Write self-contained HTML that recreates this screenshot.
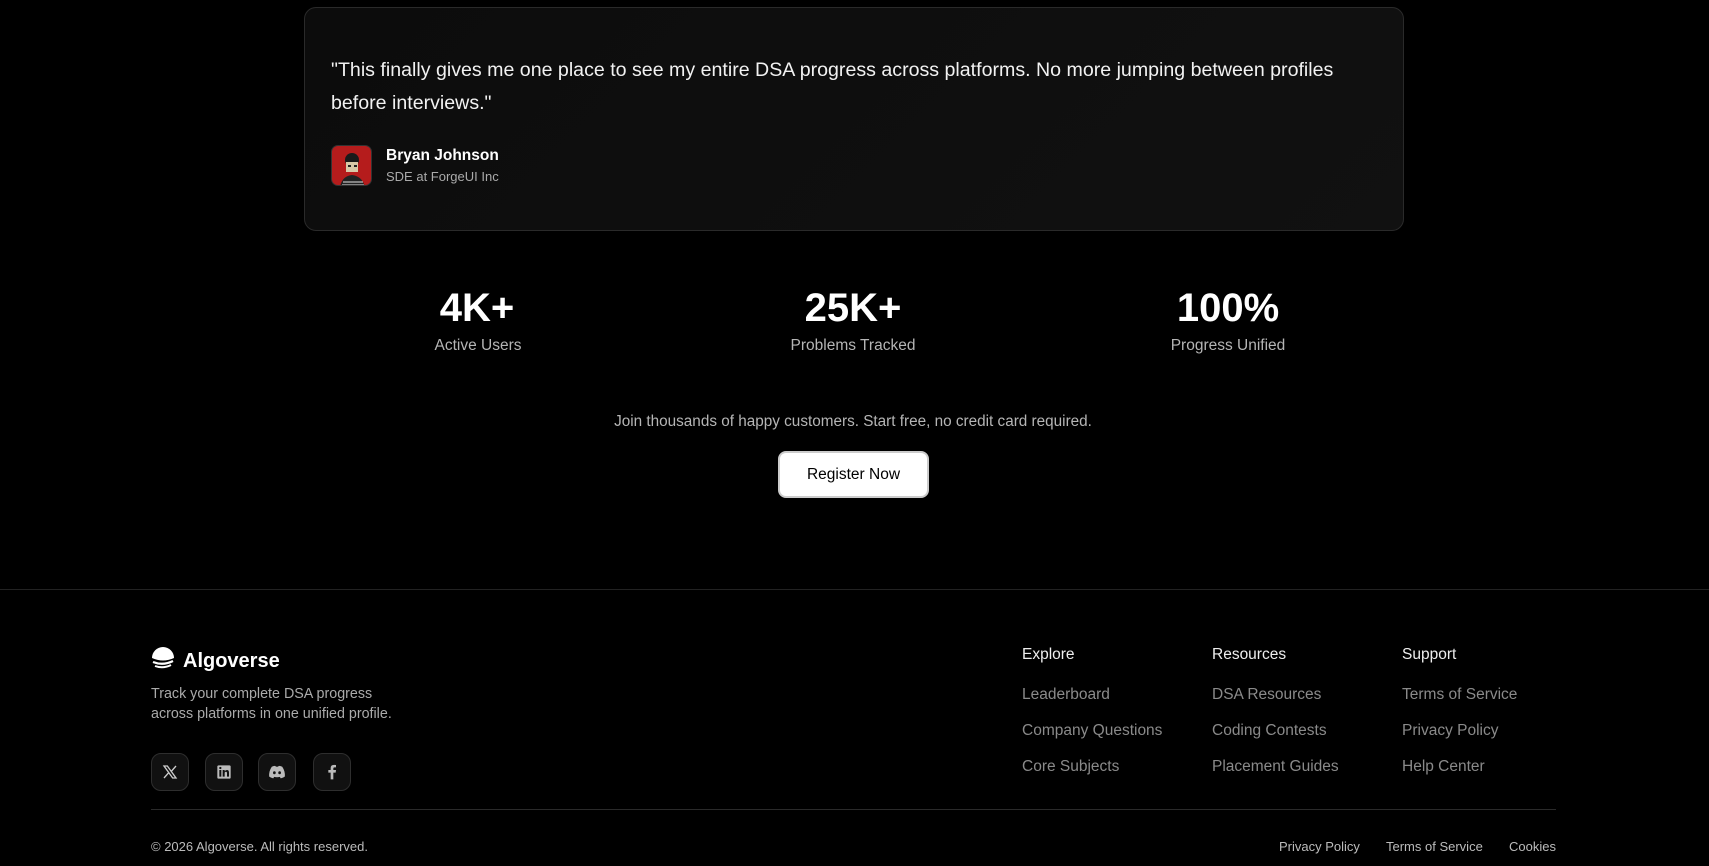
<!DOCTYPE html>
<html><head><meta charset="utf-8"><style>
*{margin:0;padding:0;box-sizing:border-box}
body{width:1709px;height:866px;background:#000;font-family:"Liberation Sans",sans-serif;color:#fff;position:relative;overflow:hidden}
.a{position:absolute;white-space:nowrap}
.card{position:absolute;left:304px;top:7px;width:1100px;height:224px;border:1px solid #2a2a2a;border-radius:12px;background:linear-gradient(135deg,#0c0c0c,#111)}
.q{left:331px;top:54px;font-size:19.6px;line-height:33px;color:#f2f2f2;white-space:normal;width:1060px}
.c{transform:translateX(-50%);text-align:center}
.num{font-size:40px;font-weight:bold;top:286px}
.lbl{font-size:15.5px;color:#b5b5b5;top:337px}
.h{font-size:15.5px;color:#eee;top:646px}
.l{font-size:15.5px;color:#8a8a8a}
.soc{position:absolute;top:753px;width:38px;height:38px;border:1px solid #2e2e2e;border-radius:10px;background:#111;display:flex;align-items:center;justify-content:center}
.b{font-size:13px;color:#bbb;top:839px}
</style></head><body>
<div class="card"></div>
<div class="a q">"This finally gives me one place to see my entire DSA progress across platforms. No more jumping between profiles before interviews."</div>
<div class="a" style="left:331px;top:145px;width:41px;height:41px;border-radius:7px;border:1px solid #333;background:#b51c1c;overflow:hidden">
<svg width="41" height="41" viewBox="0 0 41 41"><circle cx="20" cy="14" r="7" fill="#1a1a1a"/><rect x="14" y="16" width="12" height="10" fill="#d8c9a8"/><rect x="16" y="19" width="3" height="2" fill="#222"/><rect x="22" y="19" width="3" height="2" fill="#222"/><path d="M8 41 Q10 30 20 29 Q30 30 33 41Z" fill="#222"/><path d="M11 36h20M10 39h22" stroke="#bbb" stroke-width="1.3"/></svg></div>
<div class="a" style="left:386px;top:147px;font-size:15.5px;font-weight:bold">Bryan Johnson</div>
<div class="a" style="left:386px;top:169px;font-size:13px;color:#aaa">SDE at ForgeUI Inc</div>

<div class="a c num" style="left:477px">4K+</div>
<div class="a c lbl" style="left:478px">Active Users</div>
<div class="a c num" style="left:853px">25K+</div>
<div class="a c lbl" style="left:853px">Problems Tracked</div>
<div class="a c num" style="left:1228px">100%</div>
<div class="a c lbl" style="left:1228px">Progress Unified</div>

<div class="a c" style="left:853px;top:413px;font-size:15.3px;color:#b5b5b5">Join thousands of happy customers. Start free, no credit card required.</div>
<div class="a" style="left:778px;top:451px;width:151px;height:47px;background:#fff;border:2px solid #ccc;border-radius:8px;color:#000;font-size:15.5px;display:flex;align-items:center;justify-content:center">Register Now</div>

<div class="a" style="left:0;top:589px;width:1709px;height:1px;background:#222"></div>

<svg class="a" style="left:151px;top:647px" width="24" height="24" viewBox="0 0 24 24"><path d="M1 11 A11 11 0 0 1 23 11 Q12 16 1 11Z" fill="#fff"/><path d="M2 15 Q12 19 22 14" stroke="#fff" stroke-width="2.2" fill="none"/><path d="M4 19 Q12 22 20 18" stroke="#fff" stroke-width="2" fill="none"/></svg>
<div class="a" style="left:183px;top:650px;font-size:20px;font-weight:bold">Algoverse</div>
<div class="a" style="left:151px;top:684px;font-size:14.3px;color:#aaa;line-height:20px">Track your complete DSA progress<br>across platforms in one unified profile.</div>

<div class="soc" style="left:151px"><svg width="16" height="16" viewBox="0 0 24 24"><path d="M3 3h5l13 18h-5zM21 3l-7.5 8.5M3 21l7.5-8.5" stroke="#ccc" stroke-width="2" fill="none"/></svg></div>
<div class="soc" style="left:205px"><svg width="16" height="16" viewBox="0 0 24 24"><rect x="2" y="2" width="20" height="20" rx="2" fill="#bbb"/><rect x="5" y="9" width="3" height="10" fill="#111"/><circle cx="6.5" cy="6" r="1.7" fill="#111"/><path d="M10 9h3v2q1-2 3.5-2 3 0 3 4v6h-3v-5.5q0-1.8-1.6-1.8-1.9 0-1.9 2V19h-3z" fill="#111"/></svg></div>
<div class="soc" style="left:258px"><svg width="18" height="14" viewBox="0 0 24 18"><path d="M5 2 Q8 0.5 10 1 L10.5 2 Q12 1.8 13.5 2 L14 1 Q16 0.5 19 2 Q23 8 22.5 15 Q20 17 17 17.5 L15.8 15.5 Q12 16.6 8.2 15.5 L7 17.5 Q4 17 1.5 15 Q1 8 5 2Z" fill="#bbb"/><ellipse cx="8.5" cy="10" rx="1.8" ry="2" fill="#111"/><ellipse cx="15.5" cy="10" rx="1.8" ry="2" fill="#111"/></svg></div>
<div class="soc" style="left:313px"><svg width="16" height="18" viewBox="0 0 24 24"><path d="M14 23V13h3.5l.5-4h-4V6.5q0-1.5 1.6-1.5H18V1.5Q16.5 1.3 15 1.3 10 1.3 10 6v3H6.5v4H10v10z" fill="#bbb"/></svg></div>

<div class="a h" style="left:1022px">Explore</div>
<div class="a h" style="left:1212px">Resources</div>
<div class="a h" style="left:1402px">Support</div>
<div class="a l" style="left:1022px;top:686px">Leaderboard</div>
<div class="a l" style="left:1022px;top:722px">Company Questions</div>
<div class="a l" style="left:1022px;top:758px">Core Subjects</div>
<div class="a l" style="left:1212px;top:686px">DSA Resources</div>
<div class="a l" style="left:1212px;top:722px">Coding Contests</div>
<div class="a l" style="left:1212px;top:758px">Placement Guides</div>
<div class="a l" style="left:1402px;top:686px">Terms of Service</div>
<div class="a l" style="left:1402px;top:722px">Privacy Policy</div>
<div class="a l" style="left:1402px;top:758px">Help Center</div>

<div class="a" style="left:151px;top:809px;width:1405px;height:1px;background:#2a2a2a"></div>
<div class="a b" style="left:151px">© 2026 Algoverse. All rights reserved.</div>
<div class="a b" style="left:1279px">Privacy Policy</div>
<div class="a b" style="left:1386px">Terms of Service</div>
<div class="a b" style="left:1509px">Cookies</div>
</body></html>
